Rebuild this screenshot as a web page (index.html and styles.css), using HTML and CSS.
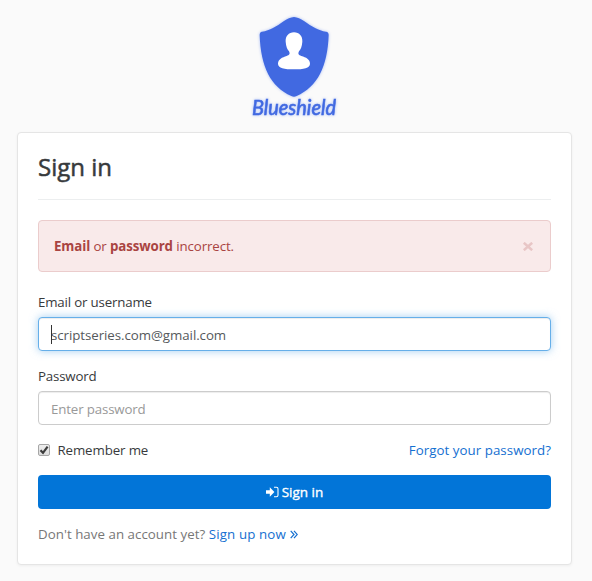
FILE: index.html
```html
<!DOCTYPE html>
<html lang="en">
<head>
<meta charset="utf-8">
<title>Sign in</title>
<link rel="stylesheet" href="styles.css">
</head>
<body>
<header class="brand">
  <svg class="logo" viewBox="0 0 330 360" width="110" height="120" role="img">
    <path class="mark" d="M162 36C172 37 182 41 192 48C216 65 235 77 258 80Q266 81 266 90C263 185 232 246 170 273Q162 278 154 273C92 246 62 185 59 90Q59 81 66 80C90 77 108 65 132 48C142 41 152 37 162 36Z"/>
    <path class="person" d="M162 82C178 82 188 94 187 110C186 125 182 133 177 139C173 147 176 150 184 153C198 157 210 163 210 176C210 190 191 193 162 193C133 193 114 190 114 176C114 163 127 157 140 153C148 150 151 147 147 139C142 133 138 125 137 110C136 94 146 82 162 82Z"/>
    <text class="wordmark" x="36" y="329" textLength="252" lengthAdjust="spacingAndGlyphs">Blueshield</text>
  </svg>
</header>
<main class="card">
  <h1 class="title">Sign in</h1>
  <div class="alert"><p><b>Email</b> or <b>password</b> incorrect.</p><svg class="close" viewBox="0 0 10 9" width="10" height="9"><path d="M.8.8 9.2 8.2M9.2.8.8 8.2"/></svg></div>
  <form>
    <label class="label" for="email">Email or username</label>
    <div class="field focused"><input id="email" type="text" value="scriptseries.com@gmail.com"><i class="caret"></i></div>
    <label class="label" for="password">Password</label>
    <div class="field"><input id="password" type="password" placeholder="Enter password"></div>
    <div class="options">
      <label class="remember"><span class="check"><svg viewBox="0 0 10 10" width="10" height="10"><path d="M1.5 5.3 4 7.8 8.6 1.7"/></svg></span><span class="remember-text">Remember me</span></label>
      <a class="forgot" href="#">Forgot your password?</a>
    </div>
    <button class="submit" type="button"><svg viewBox="0 0 13 12" width="13" height="12"><path fill="#fff" d="M0 4.2h3.8V1.3L8.4 6 3.8 10.7V7.8H0z"/><path fill="none" stroke="#fff" stroke-width="1.1" d="M8 1.2h2.4Q12 1.2 12 2.8v6.4q0 1.6-1.6 1.6H8"/></svg><span>Sign in</span></button>
    <p class="signup"><span class="question">Don't have an account yet?</span> <a href="#"><span class="up">Sign up now</span><svg viewBox="0 0 8 9" width="8" height="9"><path d="M.7.9 4 4.5.7 8.1M4 .9l3.3 3.6L4 8.1"/></svg></a></p>
  </form>
</main>
</body>
</html>
```

FILE: styles.css
```css
* { box-sizing: border-box; }
body {
  margin: 0;
  padding: 5px 20px 0 17px;
  height: 581px;
  overflow: hidden;
  background: #fafafa;
  color: #373a3c;
  font: 13.3px/21px "Open Sans", "Noto Sans", sans-serif;
}
a { color: #1570d1; text-decoration: none; }
p, h1 { margin: 0; }
.brand { height: 127px; padding-left: 223px; }
.logo { display: block; filter: drop-shadow(0 0 1.5px #a9bdf5); }
.mark { fill: #4169e1; }
.person { fill: #fff; }
.wordmark {
  fill: #4169e1;
  stroke: #4169e1;
  stroke-width: 1.8px;
  font: italic 400 61px Lato, sans-serif;
}
.card {
  height: 433px;
  padding: 20px;
  background: #fff;
  border: 1px solid #e5e5e5;
  border-radius: 4px;
  box-shadow: 0 1px 3px rgba(0, 0, 0, .05);
}
.title {
  height: 47px;
  border-bottom: 1px solid #eceeef;
  font-size: 24px;
  font-weight: 400;
  line-height: 28px;
  -webkit-text-stroke: .5px #373a3c;
}
.alert {
  display: flex;
  justify-content: space-between;
  align-items: center;
  height: 52px;
  margin: 20px 0;
  padding: 0 17px 0 15px;
  color: #a94442;
  background: #f9eaea;
  border: 1px solid #ebcccc;
  border-radius: 4px;
  letter-spacing: -.11px;
}
.close path { fill: none; stroke: #e8c6c6; stroke-width: 2.6; }
.label { display: block; height: 25px; line-height: 20px; letter-spacing: -.18px; }
.field {
  position: relative;
  height: 34px;
  margin-bottom: 15px;
  border: 1px solid #ccc;
  border-radius: 4px;
  background: #fff;
  box-shadow: inset 0 1px 1px rgba(0, 0, 0, .075);
}
.focused { border-color: #66afe9; box-shadow: inset 0 1px 1px rgba(0, 0, 0, .075), 0 0 8px rgba(102, 175, 233, .6); }
input {
  display: block;
  width: 100%;
  height: 32px;
  padding: 2px 12px 0;
  border: 0;
  outline: 0;
  background: transparent;
  color: #55595c;
  font: inherit;
  letter-spacing: -.06px;
}
input::placeholder { color: #999; opacity: 1; letter-spacing: -.15px; }
.caret { position: absolute; left: 12px; top: 7px; width: 1px; height: 19px; background: #333; }
.options { display: flex; justify-content: space-between; height: 35px; line-height: 20px; }
.remember { display: flex; }
.remember-text { letter-spacing: -.12px; }
.forgot { letter-spacing: .05px; }
.check {
  width: 12px;
  height: 12px;
  margin: 4px 7.5px 0 0;
  border: 1px solid #a6a6a6;
  border-radius: 2px;
  background: linear-gradient(#eee, #ddd);
}
.check svg { display: block; }
.check path { fill: none; stroke: #3c3c3c; stroke-width: 2.2; }
.submit {
  display: flex;
  align-items: center;
  justify-content: center;
  gap: 3px;
  width: 100%;
  height: 34px;
  padding: 0;
  border: 0;
  border-radius: 4px;
  background: #0275d8;
  color: #fff;
  font: 400 13.5px/20px "Open Sans", "Noto Sans", sans-serif;
  -webkit-text-stroke: .35px #fff;
}
.signup { margin-top: 15px; line-height: 20px; color: #818a91; }
.question { color: #777; letter-spacing: .04px; }
.up { letter-spacing: .13px; }
.signup svg { margin-left: 4px; fill: none; stroke: #1570d1; stroke-width: 1.2; }
```
